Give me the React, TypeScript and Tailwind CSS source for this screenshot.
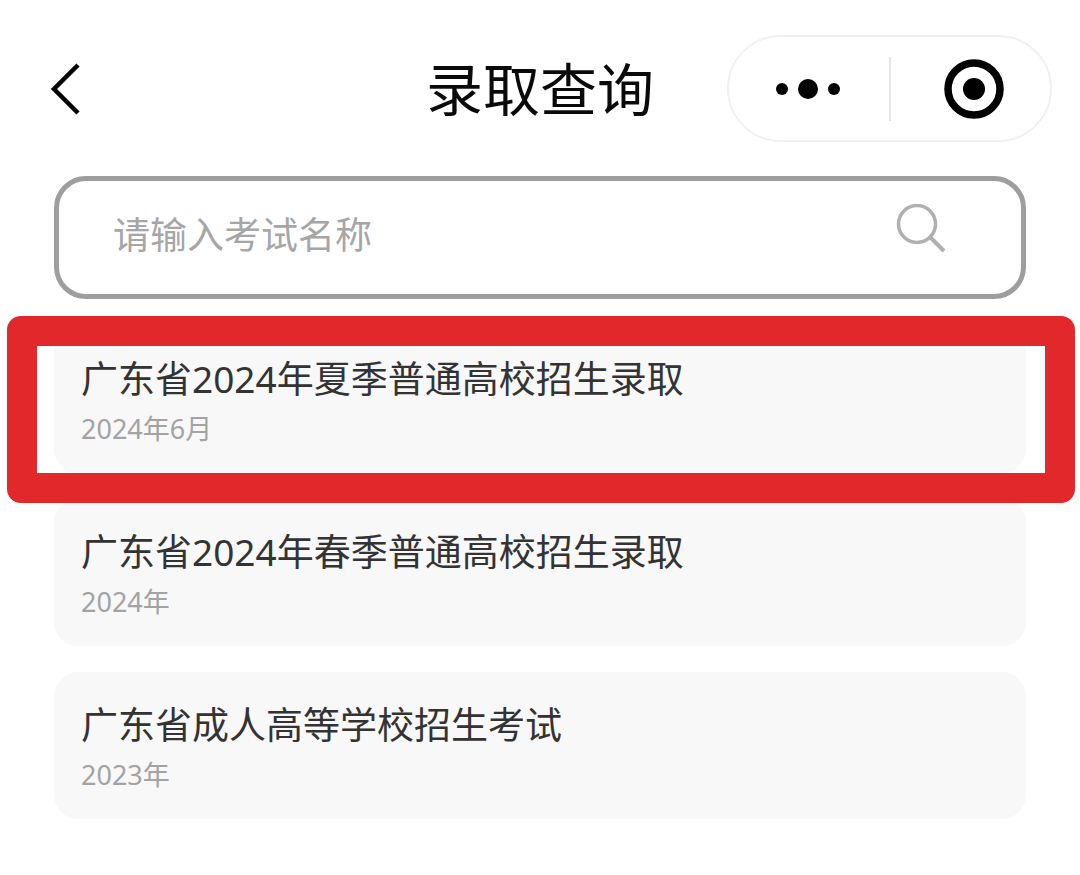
const FONT = "font-['Noto_Sans','Noto_Sans_CJK_SC',sans-serif]";

const items = [
  { title: "广东省2024年夏季普通高校招生录取", date: "2024年6月" },
  { title: "广东省2024年春季普通高校招生录取", date: "2024年" },
  { title: "广东省成人高等学校招生考试", date: "2023年" },
];

function Card({ title, date }: { title: string; date: string }) {
  return (
    <div className="h-[147px] rounded-[24px] bg-[#f8f8f9] pl-[27px] pr-[28px] pt-[28px]">
      <div className="text-[37px] leading-[50px] text-[#333333] whitespace-nowrap">{title}</div>
      <div className="mt-[7px] text-[27px] leading-[36px] text-[#a3a3a3] whitespace-nowrap">{date}</div>
    </div>
  );
}

export default function App() {
  return (
    <div className={`relative w-[1080px] h-[875px] overflow-hidden bg-white ${FONT}`}>
      <header className="grid grid-cols-[1fr_auto_1fr] items-center pt-[35px] px-[28px]">
        <div className="pl-[22px] pt-[1px]">
          <svg width="36" height="56" viewBox="0 0 36 56" fill="none">
            <path d="M28 4 L4 28 L28 52" stroke="#000" strokeWidth="4.5" />
          </svg>
        </div>
        <h1 className="pt-[2px] text-[57px] leading-[105px] font-normal text-[#0a0a0a]">录取查询</h1>
        <div className="flex justify-end">
          <div className="flex h-[107px] w-[325px] items-center rounded-full border-2 border-[#f0f0f0] bg-white">
            <div className="flex w-[160px] justify-end pr-[47px]">
              <svg width="66" height="20" viewBox="0 0 66 20" fill="#000">
                <circle cx="6" cy="10" r="6" />
                <circle cx="32" cy="10" r="10" />
                <circle cx="58" cy="10" r="6" />
              </svg>
            </div>
            <div className="h-[64px] w-[2px] bg-[#e5e5e5]" />
            <div className="flex flex-1 justify-center pl-[7px]">
              <svg width="60" height="60" viewBox="0 0 60 60">
                <circle cx="30" cy="30" r="26" fill="none" stroke="#000" strokeWidth="7.5" />
                <circle cx="30" cy="30" r="11" fill="#000" />
              </svg>
            </div>
          </div>
        </div>
      </header>

      <main className="mx-[54px] mt-[34px]">
        <div className="flex h-[123px] items-start justify-between rounded-[32px] border-[5px] border-[#9e9e9e] bg-white pl-[54px] pr-[75px]">
          <span className="mt-[29px] text-[37px] leading-[50px] text-[#a6a6a6] whitespace-nowrap">请输入考试名称</span>
          <svg width="50" height="50" viewBox="0 0 50 50" fill="none" stroke="#b0b0b0" strokeWidth="3.5" className="mt-[23px]">
            <circle cx="21" cy="20" r="18.5" />
            <path d="M34 33 L48 47" strokeWidth="4" />
          </svg>
        </div>

        <div className="mt-[27px] flex flex-col gap-[26px]">
          {items.map((it) => (
            <Card key={it.title} title={it.title} date={it.date} />
          ))}
        </div>
      </main>

      {/* annotation drawn over the first row */}
      <div className="absolute left-[7px] top-[316px] h-[187px] w-[1068px] rounded-[14px] border-[30px] border-[#e2282b]" />
    </div>
  );
}
